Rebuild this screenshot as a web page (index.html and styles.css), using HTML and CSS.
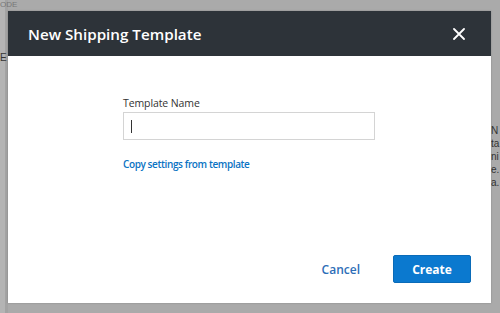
FILE: index.html
```html
<!DOCTYPE html>
<html lang="en">
<head>
    <meta charset="UTF-8">
    <meta name="viewport" content="width=device-width, initial-scale=1.0">
    <title>New Shipping Template</title>
    <link rel="stylesheet" href="styles.css">
</head>
<body>
    <div class="page">
        <span class="bg-text bg-top">ODE</span>
        <span class="bg-text bg-left">E</span>
        <span class="bg-text bg-right">N<br>ta<br>ni<br>e.<br>a.</span>

        <div class="modal">
            <div class="modal-header">
                <h2>New Shipping Template</h2>
                <button class="close" aria-label="Close">
                    <svg width="12" height="12" viewBox="0 0 12 12">
                        <path d="M1 1 L11 11 M11 1 L1 11" stroke="#fff" stroke-width="1.8" stroke-linecap="round"/>
                    </svg>
                </button>
            </div>

            <div class="modal-body">
                <label class="field-label" for="templateName">Template Name</label>
                <div class="input">
                    <span class="caret"></span>
                </div>
                <a href="#" class="link">Copy settings from template</a>
            </div>

            <div class="modal-footer">
                <a href="#" class="cancel">Cancel</a>
                <button class="create">Create</button>
            </div>
        </div>
    </div>
</body>
</html>
```

FILE: styles.css
```css
* {
    margin: 0;
    padding: 0;
    box-sizing: border-box;
}

body {
    font-family: 'Open Sans', 'Segoe UI', sans-serif;
    background: #aaaaaa;
    width: 500px;
    height: 313px;
    overflow: hidden;
}

.page {
    position: relative;
    height: 313px;
    padding: 11px 9px 10px 8px;
    background: linear-gradient(to right, #b4b4b4 0, #b4b4b4 5px, #a3a3a3 5px, #a3a3a3 8px, #aaaaaa 8px);
}

.bg-text {
    position: absolute;
    font-family: 'Liberation Sans', sans-serif;
    font-size: 10px;
    color: #333;
}

.bg-top {
    top: 0;
    left: 0;
    font-size: 8px;
    line-height: 9px;
    color: #777;
}

.bg-left {
    top: 52px;
    left: 0;
}

.bg-right {
    top: 124px;
    left: 491px;
    line-height: 13px;
}

.modal {
    position: relative;
    background: #fff;
    height: 292px;
    display: flex;
    flex-direction: column;
    box-shadow: 0 0 2px rgba(0, 0, 0, 0.2);
}

.modal-header {
    background: #2d3339;
    height: 45px;
    display: flex;
    align-items: center;
    justify-content: space-between;
    padding: 0 26px 0 20px;
}

.modal-header h2 {
    color: #fff;
    font-size: 15.2px;
    font-weight: 600;
}

.close {
    background: none;
    border: none;
    display: flex;
    padding: 0;
}

.modal-body {
    flex: 1;
    display: flex;
    flex-direction: column;
    align-items: flex-start;
    padding: 40px 0 0 115px;
}

.field-label {
    font-size: 10.5px;
    color: #333;
    letter-spacing: -0.1px;
    margin-bottom: 2px;
}

.input {
    width: 252px;
    height: 28px;
    border: 1px solid #d4d4d4;
    display: flex;
    align-items: center;
    padding-left: 7px;
}

.caret {
    width: 1px;
    height: 13px;
    background: #333;
}

.link {
    margin-top: 17px;
    font-size: 10px;
    font-weight: 600;
    letter-spacing: -0.4px;
    color: #0a73c3;
    text-decoration: none;
}

.modal-footer {
    display: flex;
    justify-content: flex-end;
    align-items: center;
    gap: 33px;
    padding: 0 20px 20px 0;
}

.cancel {
    font-size: 12px;
    font-weight: 600;
    color: #2d6eb7;
    text-decoration: none;
}

.create {
    width: 78px;
    height: 28px;
    background: #0b79cf;
    border: 1px solid #0a6bb8;
    border-radius: 2px;
    color: #fff;
    font-family: 'Open Sans', sans-serif;
    font-size: 12px;
    font-weight: 700;
}
```
